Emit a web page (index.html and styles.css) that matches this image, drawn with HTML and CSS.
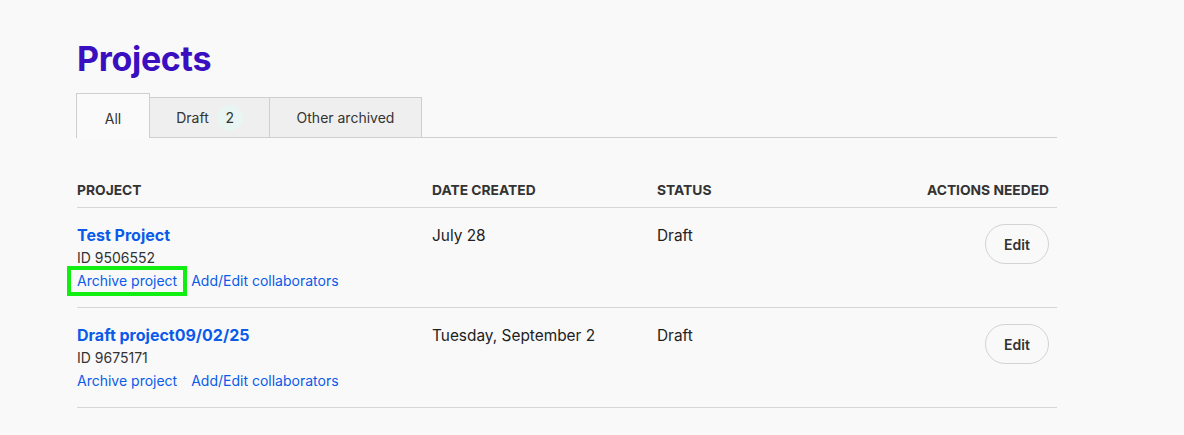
FILE: index.html
```html
<!DOCTYPE html>
<html lang="en">
<head>
<meta charset="utf-8">
<title>Projects</title>
<link rel="stylesheet" href="styles.css">
</head>
<body>
<main class="page">
  <h1 class="title">Projects</h1>
  <div class="tabs">
    <div class="tab tab-active">All</div>
    <div class="tab">Draft <span class="badge">2</span></div>
    <div class="tab tab-wide">Other archived</div>
  </div>
  <div class="table">
    <div class="row head">
      <div class="c-proj">PROJECT</div>
      <div class="c-date">DATE CREATED</div>
      <div class="c-status">STATUS</div>
      <div class="c-act">ACTIONS NEEDED</div>
    </div>
    <div class="row item">
      <div class="c-proj">
        <a class="name" href="#">Test Project</a>
        <div class="pid">ID 9506552</div>
        <div class="links"><a class="link highlight" href="#">Archive project</a><a class="link" href="#">Add/Edit collaborators</a></div>
      </div>
      <div class="c-date">July 28</div>
      <div class="c-status">Draft</div>
      <div class="c-act"><button class="edit">Edit</button></div>
    </div>
    <div class="row item">
      <div class="c-proj">
        <a class="name" href="#">Draft project09/02/25</a>
        <div class="pid">ID 9675171</div>
        <div class="links"><a class="link" href="#">Archive project</a><a class="link" href="#">Add/Edit collaborators</a></div>
      </div>
      <div class="c-date">Tuesday, September 2</div>
      <div class="c-status">Draft</div>
      <div class="c-act"><button class="edit">Edit</button></div>
    </div>
  </div>
</main>
</body>
</html>
```
FILE: styles.css
```css
* { box-sizing: border-box; }
html, body { margin: 0; background: #f9f9f9; }
body { font-family: Inter, "Noto Sans", sans-serif; color: #222; }
.page { width: 980px; margin-left: 77px; padding-top: 38px; }
.title { margin: 0; font-size: 34px; line-height: 42px; font-weight: 700; color: #3a0fc0; letter-spacing: -0.3px; }
.tabs { display: flex; align-items: flex-end; margin-top: 13px; border-bottom: 1px solid #cfcfcf; height: 45px; }
.tab { height: 40px; display: flex; align-items: center; justify-content: center; gap: 8px; font-size: 14px; color: #333; background: #efefef; border: 1px solid #cfcfcf; border-bottom: none; border-left: none; width: 120px; }
.tab-active { background: #fafafa; width: 74px; height: 45px; border-left: 1px solid #cfcfcf; margin-left: -1px; margin-bottom: -1px; padding-top: 4px; }
.tab-wide { width: 152px; }
.badge { width: 26px; height: 26px; border-radius: 50%; background: #e9f5f3; display: inline-flex; align-items: center; justify-content: center; font-size: 14px; color: #333; }
.table { margin-top: 38px; }
.row { display: grid; grid-template-columns: 355px 225px 1fr 200px; border-bottom: 1px solid #d6d6d6; }
.head { font-size: 13.8px; font-weight: 700; color: #333; height: 32px; padding-top: 6px; }
.c-act { text-align: right; padding-right: 8px; }
.item { height: 100px; padding-top: 17px; font-size: 15.4px; color: #222; }
.item .c-date, .item .c-status { padding-top: 1px; }
.name { display: block; font-size: 16px; font-weight: 700; color: #0a5bea; text-decoration: none; line-height: 20px; }
.pid { font-size: 14px; color: #333; margin-top: 4px; line-height: 18px; }
.links { display: flex; gap: 14px; margin-top: 5px; }
.link { font-size: 14px; color: #0a5bea; text-decoration: none; line-height: 18px; }
.highlight { outline: 4px solid #11ee11; padding: 2px 6px; margin: -2px -6px; }
.edit { width: 64px; height: 40px; border-radius: 20px; border: 1px solid #d3d3d3; background: #f9f9f9; font-family: inherit; font-size: 14px; font-weight: 600; color: #333; margin-top: -1px; }
```
